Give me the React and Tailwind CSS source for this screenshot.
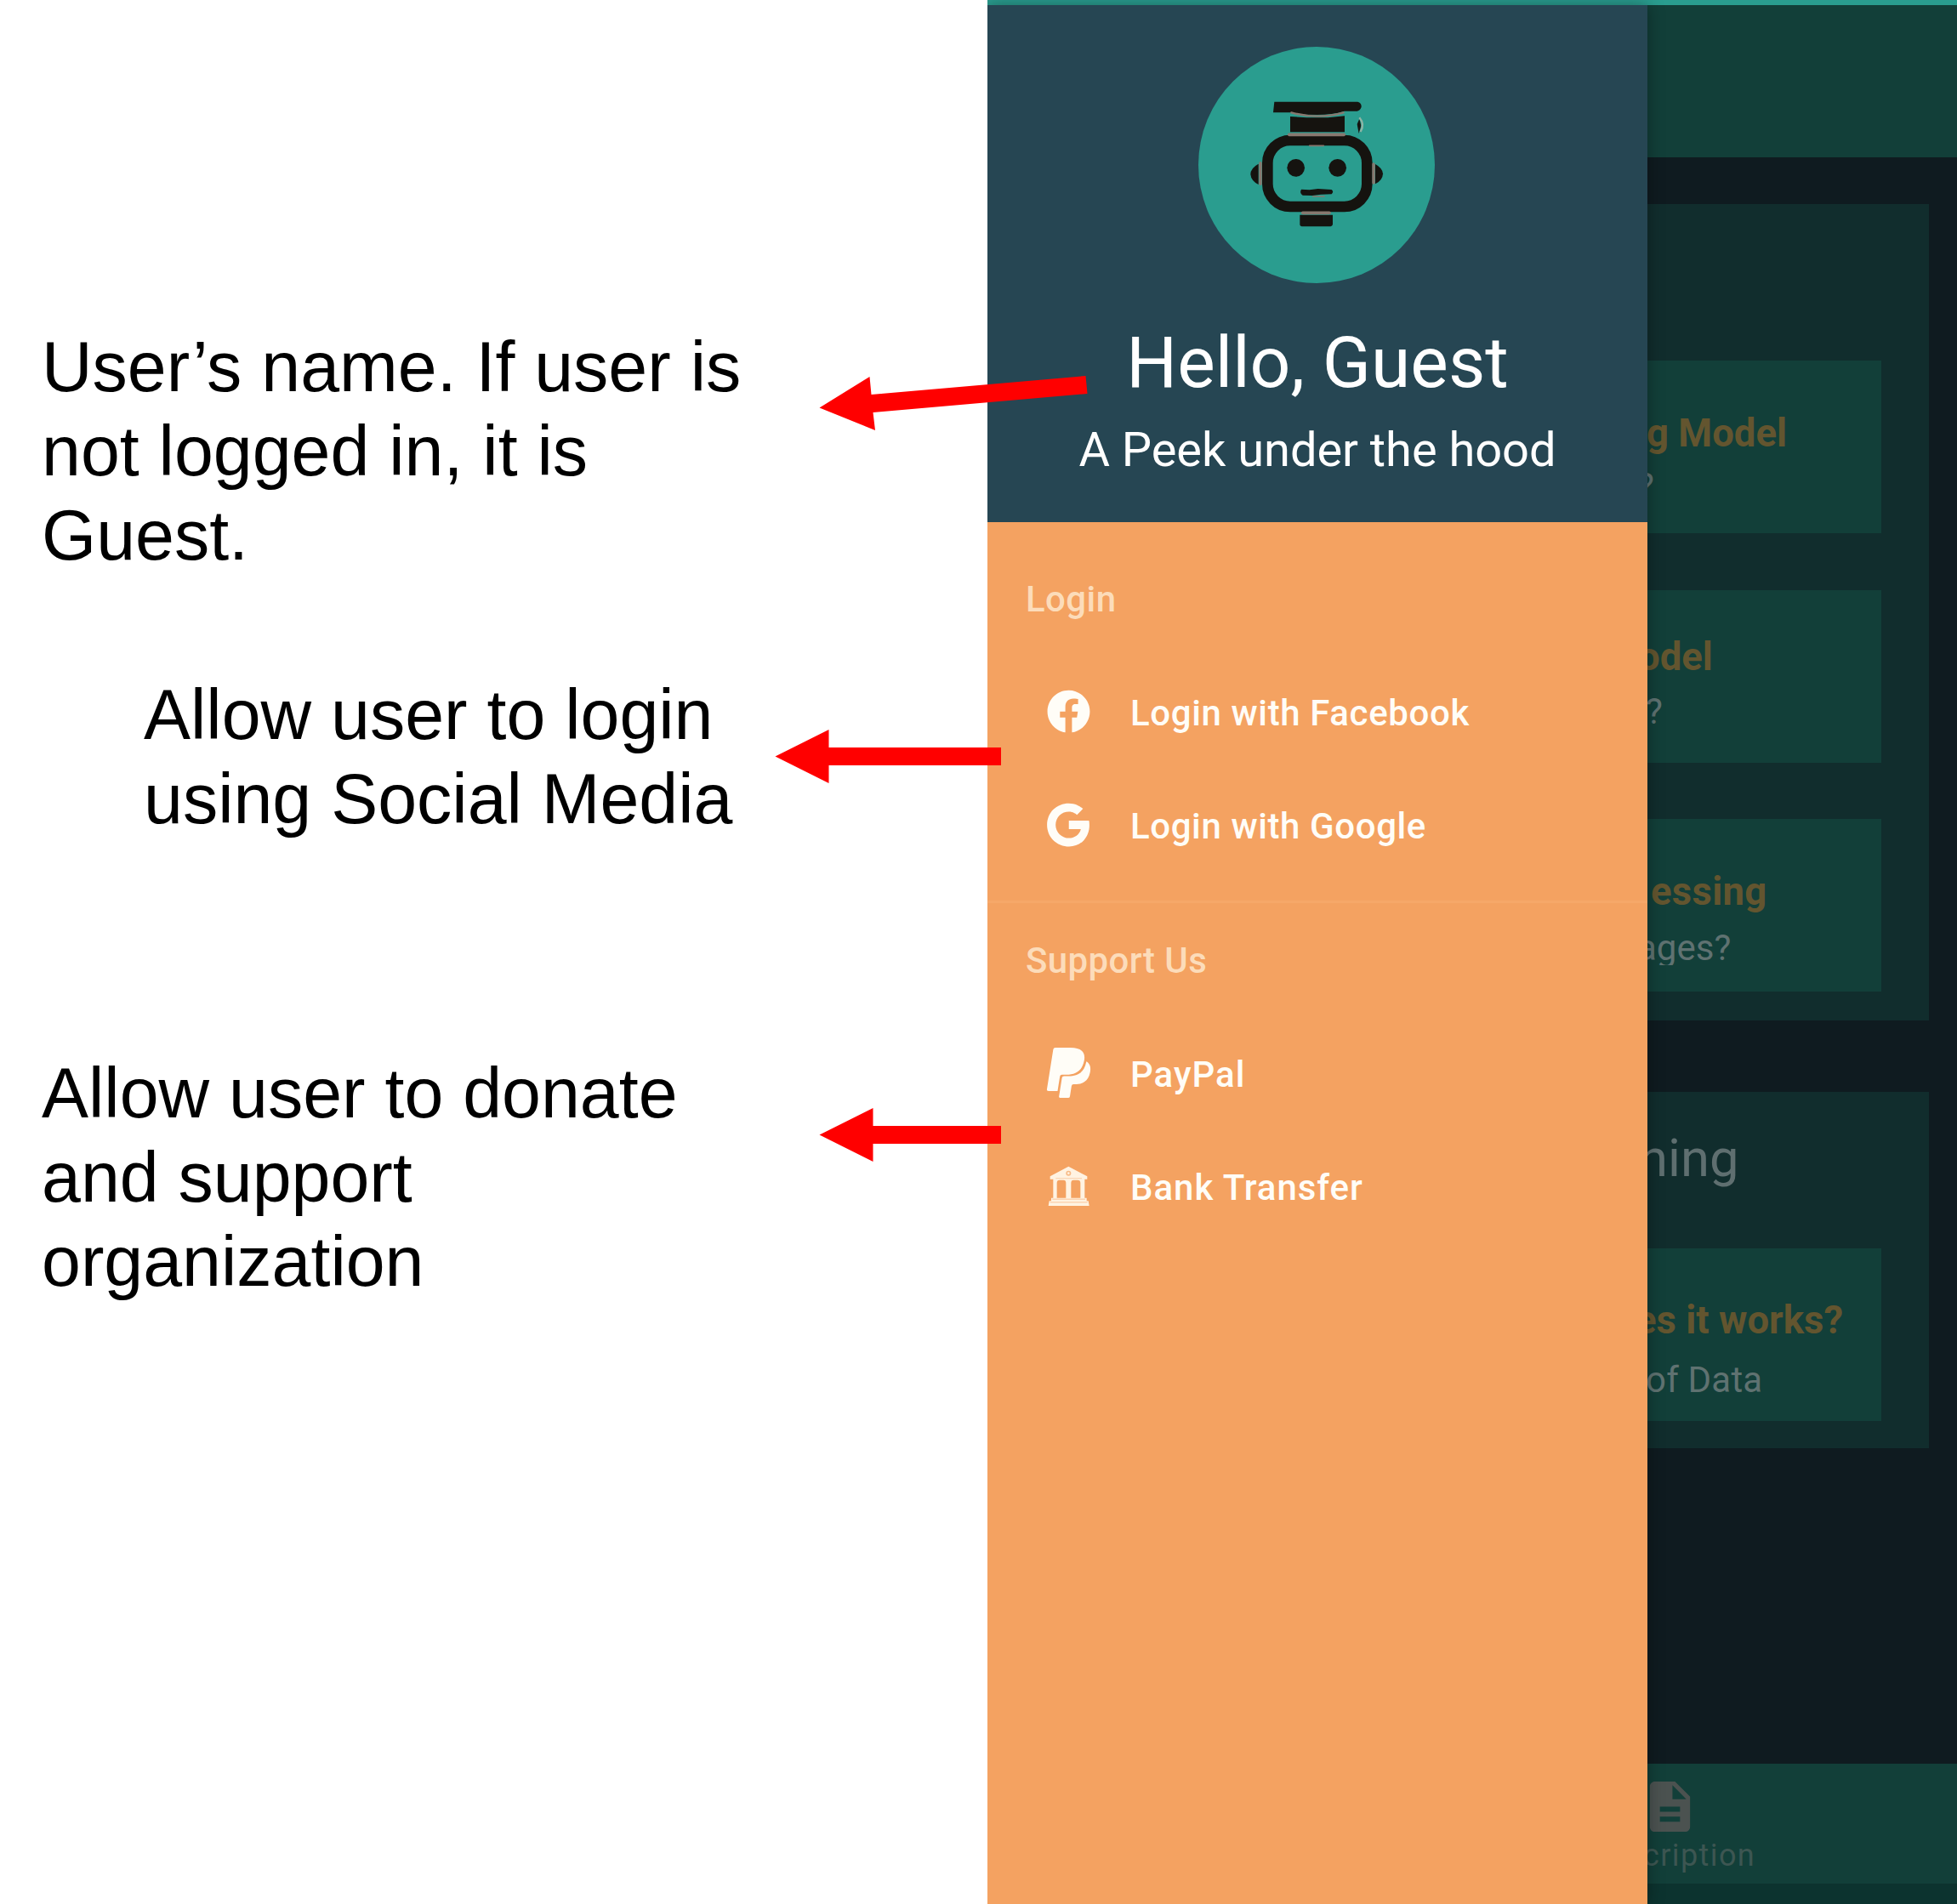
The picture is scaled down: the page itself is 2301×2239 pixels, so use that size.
import { IoLogoFacebook, IoLogoGoogle, IoLogoPaypal } from "react-icons/io5";
import { MdDescription } from "react-icons/md";

function Robot() {
  return (
    <svg viewBox="88 72 834 834" className="mr-[2px] size-[278px]">
      <circle cx="505" cy="489" r="417" fill="#2a9d8f" />
      <g fill="#15130f">
        <path d="M356 266H650Q664 270 663 284Q660 296 648 299H603Q560 312 507 312Q455 312 412 304H352Z" />
        <path d="M412 318L470 322H545L604 316V373H412Z" />
        <path d="M446 665H562V698Q560 706 550 706H458Q446 706 446 698Z" />
        <path d="M300 485Q272 500 272 522Q274 545 300 558Z" />
        <path d="M712 486Q738 500 739 520Q738 544 712 556Z" />
        <circle cx="432" cy="499" r="31" />
        <circle cx="579" cy="499" r="31" />
        <path d="M451 575L480 577L510 573L558 576Q567 583 558 592L520 593L490 597L456 596Q444 588 451 575Z" />
        <path d="M656 326L648 345L654 378L662 350Z" />
      </g>
      <rect x="332" y="402" width="351" height="234" rx="80" fill="none" stroke="#15130f" strokeWidth="38" />
      <g fill="none" stroke="#87786f" strokeLinecap="round">
        <path d="M408 382H602" strokeWidth="11" />
        <path d="M416 304Q507 330 600 304" strokeWidth="7" />
        <path d="M456 658H550" strokeWidth="11" />
        <path d="M307 482V556" strokeWidth="10" />
        <path d="M706 486V552" strokeWidth="10" />
        <path d="M492 600H532" strokeWidth="5" />
        <path d="M480 421H530" strokeWidth="5" />
      </g>
      <path d="M656 322Q676 345 660 372" fill="none" stroke="#8fb5a6" strokeWidth="7" />
    </svg>
  );
}

function BankIcon() {
  return (
    <svg viewBox="50 453 147 144" className="h-[48px] w-[49px]" fill="#fff3e2">
      <path d="M123 455L189 490V500H180V566H187V577H193L196 594H52L55 577H62V566H69V500H58V490Z" />
      <g fill="#f4a261">
        <path d="M82 566V513Q82 503 91 503H105Q114 503 114 513V566Z" />
        <path d="M132 566V513Q132 503 141 503H155Q165 503 165 513V566Z" />
        <circle cx="123" cy="479" r="9" opacity=".7" />
        <rect x="66" y="569" width="116" height="3" opacity=".55" />
        <rect x="58" y="580" width="132" height="3" opacity=".55" />
        <rect x="78" y="496" width="92" height="2.500" opacity=".5" />
      </g>
      <circle cx="123" cy="479" r="4" />
    </svg>
  );
}

function MenuItem({ icon, label, tracking }) {
  return (
    <div className="flex h-[133px] items-center gap-[43px] pl-[65px]">
      <span className="-mt-[4px] flex w-[60px] justify-center">{icon}</span>
      <span className={`text-[42px] leading-[133px] font-medium whitespace-nowrap ${tracking}`}>{label}</span>
    </div>
  );
}

function SectionLabel({ children }) {
  return (
    <h2 className="mb-[24px] pl-[45px] text-[42px] leading-[86px] font-medium tracking-[0.4px] text-[#fcdcba]">
      {children}
    </h2>
  );
}

function Drawer() {
  return (
    <aside className="relative z-10 flex w-[776px] shrink-0 flex-col bg-[#f4a261] text-[#fffdf7] shadow-[0_0_18px_rgba(0,0,0,0.35)]">
      <header className="flex h-[608.5px] flex-col items-center bg-[#264653] pt-[49.5px] text-white">
        <Robot />
        <h1 className="mt-[45px] text-[84px] leading-[98px] whitespace-nowrap">Hello, Guest</h1>
        <p className="mt-[20px] text-[56px] leading-[66px] tracking-[-0.05px] whitespace-nowrap">A Peek under the hood</p>
      </header>
      <section className="h-[445px] pt-[48px]">
        <SectionLabel>Login</SectionLabel>
        <MenuItem icon={<IoLogoFacebook className="size-[57px]" />} label="Login with Facebook" tracking="tracking-[0.62px]" />
        <MenuItem icon={<IoLogoGoogle className="size-[58px]" />} label="Login with Google" tracking="tracking-[0.6px]" />
      </section>
      <section className="border-t-[3px] border-[#f6a869] pt-[25px]">
        <SectionLabel>Support Us</SectionLabel>
        <MenuItem icon={<IoLogoPaypal className="size-[63px] shrink-0" />} label="PayPal" tracking="tracking-[1px]" />
        <MenuItem icon={<BankIcon />} label="Bank Transfer" tracking="tracking-[0.95px]" />
      </section>
    </aside>
  );
}

function Card({ children }) {
  return <div className="mr-[56px] flex h-[203px] flex-col overflow-hidden bg-[#123f39]">{children}</div>;
}

const title = "text-[45.5px] leading-[54px] font-bold whitespace-nowrap text-[#63552f]";
const sub = "text-[42px] leading-[50px] whitespace-nowrap text-[#5f7271]";

function Content() {
  return (
    <main className="flex min-w-0 flex-1 flex-col overflow-hidden bg-[#0f1b20]">
      <div className="h-[179px] shrink-0 bg-[#123f39]" />
      <section className="mt-[55.5px] mr-[33px] flex h-[960px] shrink-0 flex-col gap-[66.5px] bg-[#112d2d] pt-[184px]">
        <Card>
          <h3 className={`mt-[58.5px] -ml-[1px] ${title}`}>g Model</h3>
          <p className={`mt-[10px] -ml-[12px] ${sub}`}>?</p>
        </Card>
        <Card>
          <h3 className={`mt-[52px] -ml-[11px] ${title}`}>odel</h3>
          <p className={`mt-[12.5px] -ml-[2px] ${sub}`}>?</p>
        </Card>
        <Card>
          <h3 className={`mt-[59px] ml-[4px] tracking-[0.3px] ${title}`}>essing</h3>
          <p className={`mt-[13.5px] -ml-[12px] h-[45px] overflow-hidden ${sub}`}>ages?</p>
        </Card>
      </section>
      <section className="mt-[84px] mr-[33px] h-[419px] shrink-0 bg-[#112d2d] pt-[42px]">
        <h2 className="mb-[70px] -ml-[10px] text-[61.5px] leading-[72px] text-[#5f6f70]">ning</h2>
        <Card>
          <h3 className={`mt-[58px] -ml-[14px] ${title}`}>es it works?</h3>
          <p className={`mt-[18px] -ml-[2px] tracking-[0.2px] ${sub}`}>of Data</p>
        </Card>
      </section>
      <footer className="mt-auto flex h-[165px] shrink-0 flex-col border-b-[24px] border-[#0c332f] bg-[#123f39] pt-[15px]">
        <MdDescription className="-ml-[9px] size-[71px] text-[#4b5250]" />
        <span className="mt-[1px] -ml-[5px] text-[36px] leading-[42px] tracking-[1.4px] text-[#3d5652]">cription</span>
      </footer>
    </main>
  );
}

function Note({ className, lines }) {
  return (
    <p className={`text-[82.5px] leading-[99px] whitespace-nowrap ${className}`}>
      {lines.map((line) => (
        <span key={line} className="block">{line}</span>
      ))}
    </p>
  );
}

export default function App() {
  return (
    <div className="relative flex h-[2239px] w-[2301px] overflow-hidden bg-white">
      <div className="flex w-[1161px] shrink-0 flex-col pt-[382px] font-['Liberation_Sans',Arial,sans-serif] text-black">
        <Note className="pl-[49px]" lines={["User’s name. If user is", "not logged in, it is", "Guest."]} />
        <Note className="mt-[112px] pl-[169px]" lines={["Allow user to login", "using Social Media"]} />
        <Note className="mt-[247px] pl-[49px]" lines={["Allow user to donate", "and support", "organization"]} />
      </div>

      <div className="flex flex-1 flex-col overflow-hidden bg-[#2a9d8f] pt-[5.5px] font-['Roboto',sans-serif]">
        <div className="flex min-h-0 flex-1">
          <Drawer />
          <Content />
        </div>
      </div>

      <svg className="pointer-events-none absolute top-[442px] left-[963px] z-20 h-[64px] w-[317px]" viewBox="963 442 317 64" fill="#f00">
        <path d="M963.500 479.500L1022.500 443L1024.500 464L1276.500 442L1278.500 463L1026.500 485L1029 506Z" />
      </svg>
      <svg className="pointer-events-none absolute top-[858px] left-[911px] z-20 h-[63px] w-[266px]" viewBox="0 0 266 63" fill="#f00">
        <path d="M0.500 31.500L63.500 0V21H266V42H63.500V63Z" />
      </svg>
      <svg className="pointer-events-none absolute top-[1303px] left-[963px] z-20 h-[63px] w-[214px]" viewBox="0 0 214 63" fill="#f00">
        <path d="M0.500 31.500L63.500 0V21H214V42H63.500V63Z" />
      </svg>
    </div>
  );
}
